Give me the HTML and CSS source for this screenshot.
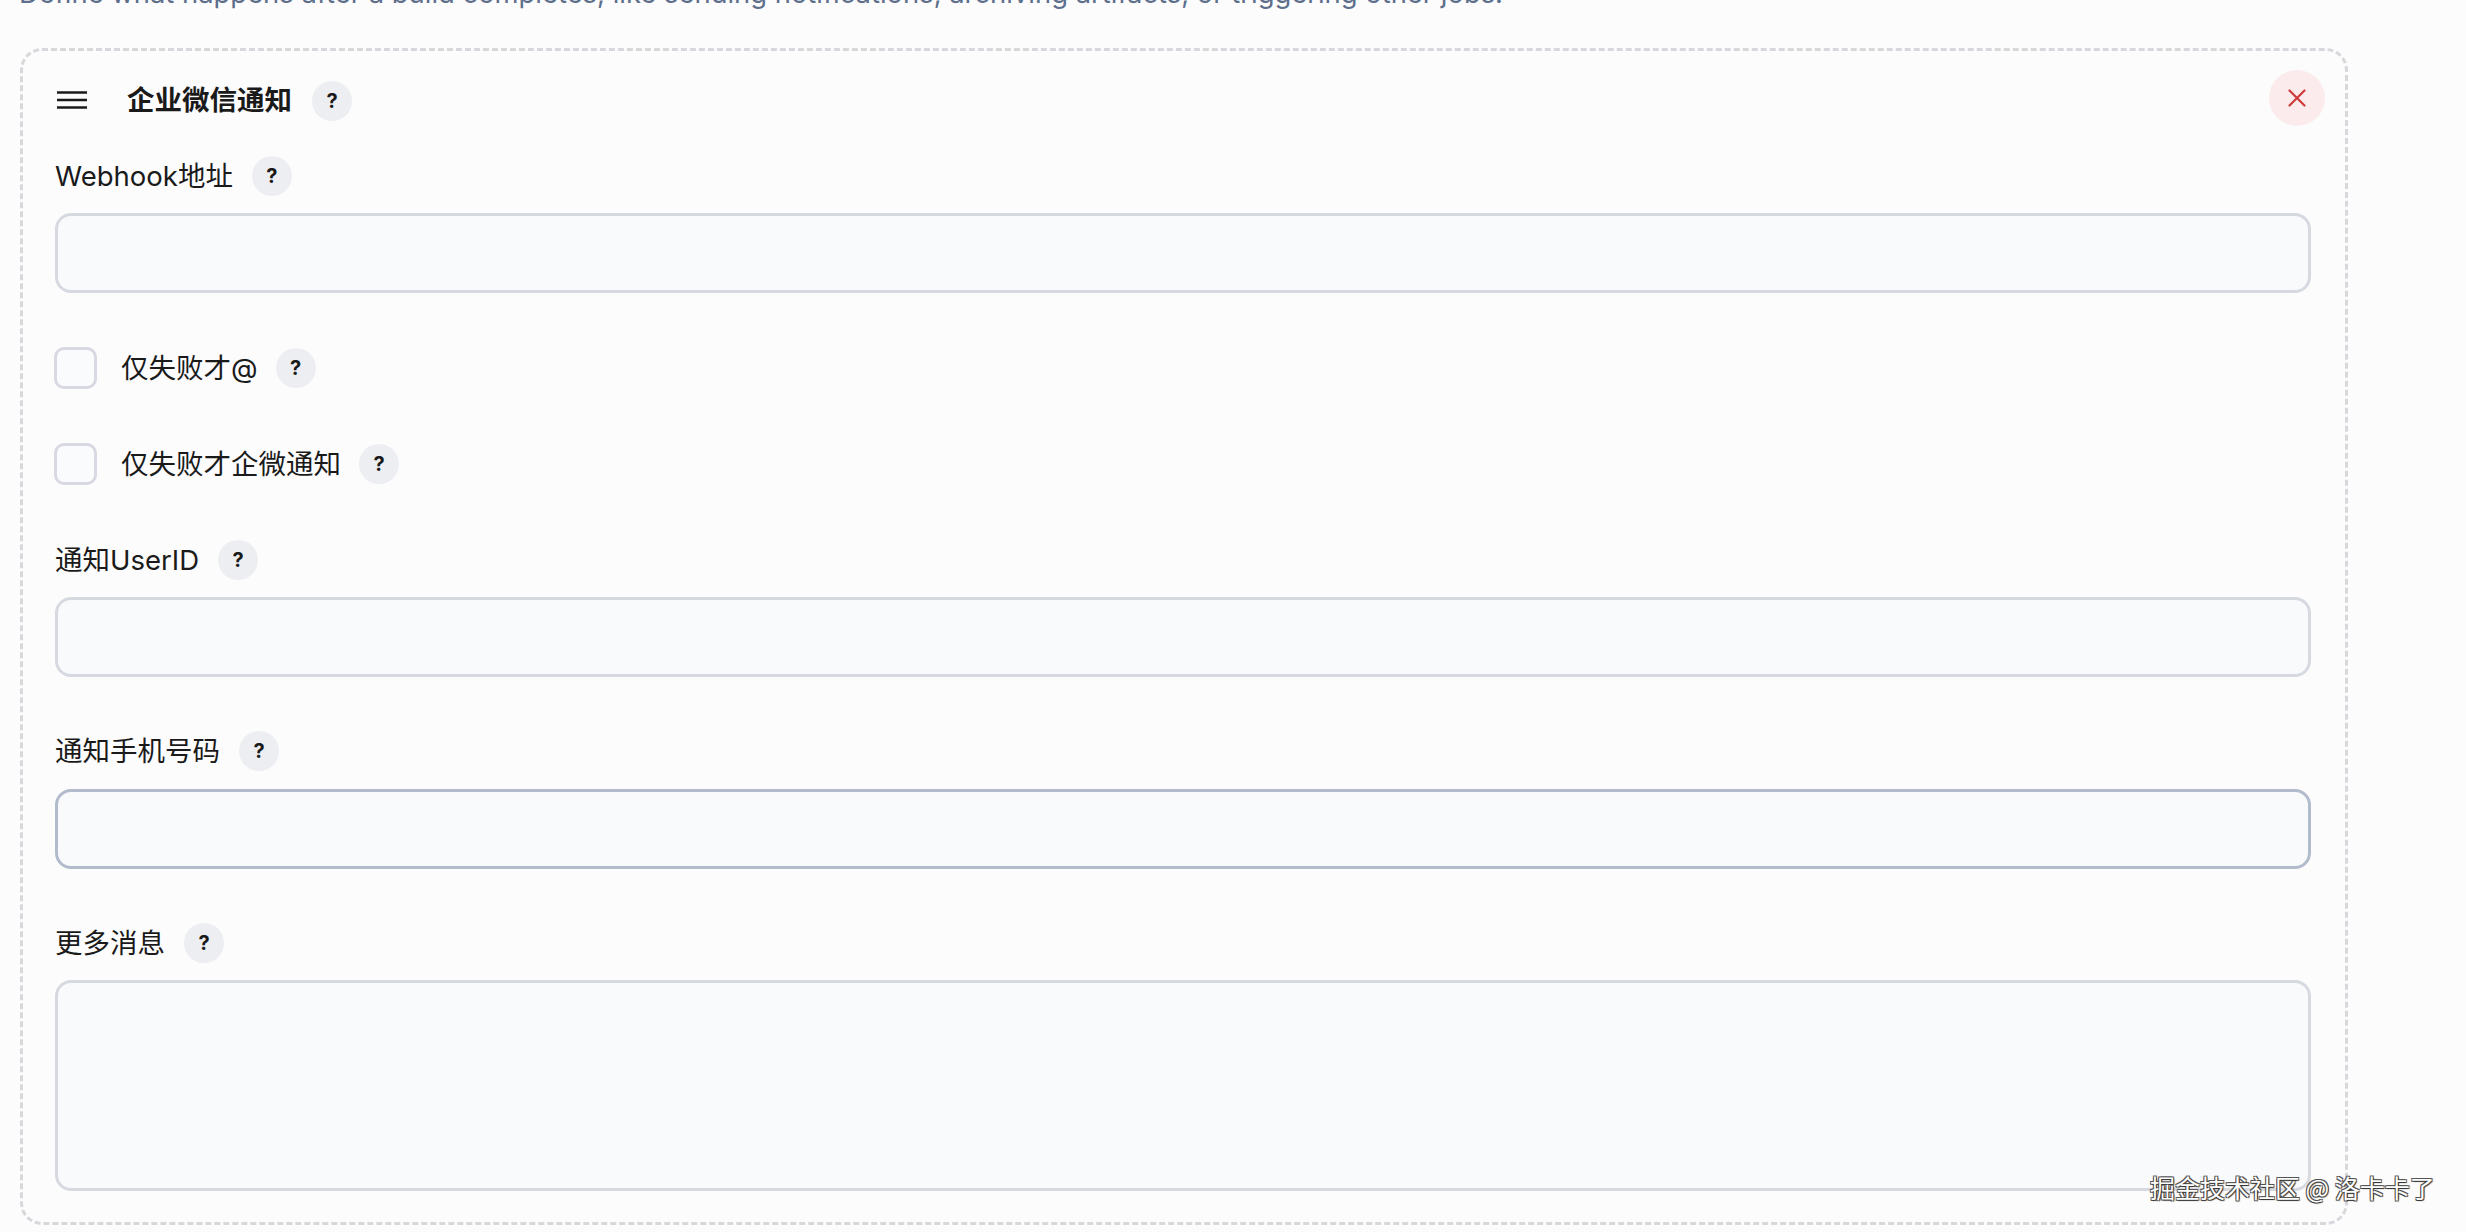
FILE: index.html
```html
<!DOCTYPE html>
<html lang="zh-CN">
<head>
<meta charset="utf-8">
<title>企业微信通知</title>
<link rel="stylesheet" href="styles.css">
</head>
<body>
<p class="desc">Define what happens after a build completes, like sending notifications, archiving artifacts, or triggering other jobs.</p>
<div class="card">
  <div class="card-head">
    <svg class="drag" width="30" height="18" viewBox="0 0 30 18"><path d="M0 1.5H30M0 9H30M0 16.5H30" stroke="#1a1a1a" stroke-width="2.6"/></svg>
    <span class="title">企业微信通知</span>
    <span class="help">?</span>
    <span class="spacer"></span>
    <button class="close" type="button" aria-label="删除">
      <svg width="18" height="18" viewBox="0 0 18 18"><path d="M1.5 1.5L16.5 16.5M16.5 1.5L1.5 16.5" stroke="#cf3b3b" stroke-width="2.2" stroke-linecap="round"/></svg>
    </button>
  </div>

  <div class="label-row first"><span class="label">Webhook地址</span><span class="help">?</span></div>
  <input class="text" type="text">

  <div class="check-row cb1"><span class="box"></span><span class="label">仅失败才@</span><span class="help">?</span></div>
  <div class="check-row cb2"><span class="box"></span><span class="label">仅失败才企微通知</span><span class="help">?</span></div>

  <div class="label-row"><span class="label">通知UserID</span><span class="help">?</span></div>
  <input class="text" type="text">

  <div class="label-row"><span class="label">通知手机号码</span><span class="help">?</span></div>
  <input class="text hover" type="text">

  <div class="label-row"><span class="label">更多消息</span><span class="help">?</span></div>
  <textarea class="area"></textarea>
</div>
<div class="watermark">掘金技术社区 @ 洛卡卡了</div>
</body>
</html>
```

FILE: styles.css
```css
* { box-sizing: border-box; }
html, body { margin: 0; padding: 0; }
body {
  background: #fcfcfd;
  font-family: Inter, "Noto Sans CJK SC", sans-serif;
  color: #1a1a1a;
  width: 2466px;
  height: 1232px;
  overflow: hidden;
  position: relative;
}
.desc {
  margin: -23px 0 0 19px;
  font-size: 27.4px;
  line-height: 32px;
  color: #5e6f8c;
  height: 32px;
  white-space: nowrap;
}
.card {
  margin: 39px 0 0 20px;
  width: 2328px;
  height: 1177px;
  border: 3px dashed #d7d8dc;
  border-radius: 22px;
  padding: 19px 34px 0 32px;
  display: flex;
  flex-direction: column;
}
.card-head {
  display: flex;
  align-items: center;
  height: 56px;
  margin-right: -14px;
}
.drag { margin-left: 2px; margin-right: 40px; margin-top: 3px; }
.title {
  font-size: 27.5px;
  font-weight: 700;
  line-height: 40px;
  margin-top: 4px;
}
.card-head .help { margin-left: 20px; margin-top: 6px; }
.spacer { flex: 1; }
.close {
  width: 56px;
  height: 56px;
  border-radius: 50%;
  border: none;
  background: #fbebec;
  display: flex;
  align-items: center;
  justify-content: center;
  padding: 0;
  margin-top: 0;
}
.help {
  width: 40px;
  height: 40px;
  border-radius: 50%;
  background: #eceef2;
  display: inline-flex;
  align-items: center;
  justify-content: center;
  font-family: Inter, "Noto Sans", sans-serif;
  font-weight: 700;
  font-size: 20px;
  color: #1a1a1a;
  flex: none;
}
.label {
  font-size: 27.5px;
  line-height: 40px;
  color: #1a1a1a;
}
.label-row {
  display: flex;
  align-items: center;
  height: 40px;
  margin-top: 54px;
}
.label-row.first { margin-top: 30px; }
.label-row .help { margin-left: 19px; }
.text {
  display: block;
  width: 100%;
  height: 80px;
  margin-top: 17px;
  border: 3px solid #d7d9e1;
  border-radius: 16px;
  background: #f9fafb;
  outline: none;
  font: inherit;
}
.text.hover { border-color: #b1bbcb; margin-top: 18px; }
.check-row {
  display: flex;
  align-items: center;
  height: 42px;
}
.cb1 { margin-top: 54px; }
.cb2 { margin-top: 54px; }
.check-row + .label-row { margin-top: 55px; }
.box {
  width: 43px;
  height: 42px;
  border: 3px solid #d8d9e2;
  border-radius: 10px;
  background: #fafbfc;
  margin-left: -1px;
  margin-right: 24px;
  flex: none;
}
.check-row .help { margin-left: 18px; }
.area {
  display: block;
  width: 100%;
  height: 211px;
  margin-top: 17px;
  border: 3px solid #d7d9e1;
  border-radius: 16px;
  background: #f9fafb;
  resize: none;
  outline: none;
  font: inherit;
}
.watermark {
  position: absolute;
  left: 2150px;
  top: 1170px;
  font-family: "Noto Sans CJK SC", sans-serif;
  font-size: 25px;
  line-height: 34px;
  color: #ffffff;
  text-shadow: 1px 1px 1px #333, -1px -1px 0 #555, 1px -1px 0 #555, -1px 1px 0 #555;
  white-space: nowrap;
}
```
